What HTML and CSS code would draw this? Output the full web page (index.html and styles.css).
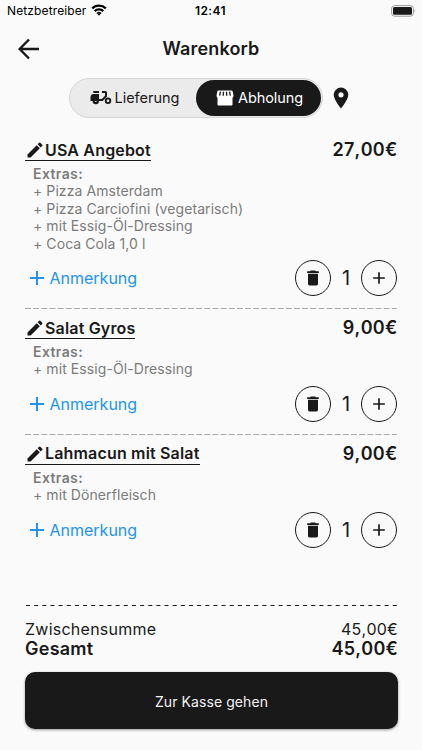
FILE: index.html
```
<!DOCTYPE html>
<html lang="de">
<head>
<meta charset="utf-8">
<title>Warenkorb</title>
<link rel="stylesheet" href="styles.css">
</head>
<body>
<svg class="defs" width="0" height="0">
  <symbol id="edit" viewBox="0 0 24 24"><path d="M3 17.25V21h3.750L17.810 9.940l-3.750-3.750zM20.710 7.040a1 1 0 0 0 0-1.410l-2.340-2.340a1 1 0 0 0-1.410 0l-1.830 1.830 3.750 3.750z"/></symbol>
  <symbol id="trash" viewBox="0 0 24 24"><path d="M6 19c0 1.100.9 2 2 2h8c1.100 0 2-.9 2-2V7H6zM19 4h-3.500l-1-1h-5l-1 1H5v2h14z"/></symbol>
  <symbol id="add" viewBox="0 0 24 24"><path d="M19 13h-6v6h-2v-6H5v-2h6V5h2v6h6z"/></symbol>
</svg>
<div class="status">
  <span class="carrier">Netzbetreiber</span>
  <svg class="wifi" width="16" height="12" viewBox="0 0 16 12"><g fill="none" stroke="#000" stroke-width="2.200"><path d="M1.200 4.400a9.700 9.700 0 0 1 13.600 0"/><path d="M3.700 7.100a6.100 6.100 0 0 1 8.600 0"/></g><path d="M8 11.700 5.400 9a3.700 3.700 0 0 1 5.200 0z"/></svg>
  <span class="time">12:41</span>
  <svg class="battery" width="26" height="12" viewBox="0 0 26 12"><rect x=".6" y=".6" width="21.800" height="10.600" rx="3" fill="none" stroke="#999"/><rect x="2" y="2" width="19" height="7.800" rx="1.500"/><path d="M23.600 4.200q1.600 1.700 0 3.400z" fill="#888"/></svg>
</div>
<header class="header">
  <svg class="back" width="22" height="22" viewBox="0 0 22 22"><path d="M21 11H2M11 1.500 1.700 11l9.300 9.500" fill="none" stroke="#191919" stroke-width="2.400"/></svg>
  <h1>Warenkorb</h1>
</header>
<div class="mode">
  <div class="toggle">
    <div class="option delivery">
      <svg width="22" height="16" viewBox="0 0 22 16"><path d="M3.300 1H9v2H3.300zM3.500 4H9v5h2.800L15 5.700V3h-3V1h3.400q1.600 0 1.600 1.600v3.800L12.700 11H9a3.200 3.200 0 0 1-6.400 0H.5V7.500Q.5 4 3.500 4zM4.600 11a1.200 1.200 0 0 0 2.300 0z"/><circle cx="18" cy="10.800" r="2.300" fill="none" stroke="#191919" stroke-width="1.900"/></svg>
      <span>Lieferung</span>
    </div>
    <div class="option pickup">
      <svg width="18" height="16" viewBox="0 0 18 16"><path d="M2.500.5h13q1 0 1.200 1l.8 4q.1 1.500-1 2.200v6.800q0 1-1 1h-13q-1 0-1-1V7.700Q.4 7 .5 5.500l.8-4q.2-1 1.200-1z" fill="#fff"/><path d="m4.400 1.700-.7 4M7.500 1.700l-.3 4M10.500 1.700l.3 4M13.600 1.700l.7 4" stroke="#191919" stroke-width="1.300"/></svg>
      <span>Abholung</span>
    </div>
  </div>
  <svg class="pin" width="16" height="22" viewBox="0 0 16 22"><path fill-rule="evenodd" d="M8 .5A7.300 7.300 0 0 0 .7 7.800C.7 13 8 21.500 8 21.500S15.300 13 15.300 7.800A7.300 7.300 0 0 0 8 .5zm0 4.700a2.600 2.600 0 1 1 0 5.200 2.600 2.600 0 0 1 0-5.200z"/></svg>
</div>
<main class="cart">
  <section class="item">
    <div class="row"><div class="name"><svg><use href="#edit"/></svg><span>USA Angebot</span></div><strong class="price">27,00€</strong></div>
    <div class="extras"><b>Extras:</b><div>+ Pizza Amsterdam</div><div>+ Pizza Carciofini (vegetarisch)</div><div>+ mit Essig-Öl-Dressing</div><div>+ Coca Cola 1,0 l</div></div>
    <div class="controls"><div class="note"><svg><use href="#add"/></svg><span>Anmerkung</span></div><div class="circle"><svg><use href="#trash"/></svg></div><span class="qty">1</span><div class="circle"><svg><use href="#add"/></svg></div></div>
    <svg class="dash" width="373" height="1"><path d="M0 .5H372"/></svg>
  </section>
  <section class="item">
    <div class="row"><div class="name"><svg><use href="#edit"/></svg><span>Salat Gyros</span></div><strong class="price">9,00€</strong></div>
    <div class="extras"><b>Extras:</b><div>+ mit Essig-Öl-Dressing</div></div>
    <div class="controls"><div class="note"><svg><use href="#add"/></svg><span>Anmerkung</span></div><div class="circle"><svg><use href="#trash"/></svg></div><span class="qty">1</span><div class="circle"><svg><use href="#add"/></svg></div></div>
    <svg class="dash" width="373" height="1"><path d="M0 .5H372"/></svg>
  </section>
  <section class="item">
    <div class="row"><div class="name"><svg><use href="#edit"/></svg><span>Lahmacun mit Salat</span></div><strong class="price">9,00€</strong></div>
    <div class="extras"><b>Extras:</b><div>+ mit Dönerfleisch</div></div>
    <div class="controls"><div class="note"><svg><use href="#add"/></svg><span>Anmerkung</span></div><div class="circle"><svg><use href="#trash"/></svg></div><span class="qty">1</span><div class="circle"><svg><use href="#add"/></svg></div></div>
  </section>
</main>
<footer class="summary">
  <svg class="dash dark" width="373" height="2"><path d="M1 .5H372"/></svg>
  <div class="sum"><span>Zwischensumme</span><span class="amount">45,00€</span></div>
  <div class="sum total"><span>Gesamt</span><span class="amount">45,00€</span></div>
  <div class="checkout">Zur Kasse gehen</div>
</footer>
</body>
</html>
```
FILE: styles.css
```
* { box-sizing: border-box; }
body {
  margin: 0;
  width: 422px;
  height: 750px;
  overflow: hidden;
  display: flex;
  flex-direction: column;
  background: #fafafa;
  color: #191919;
  font-family: Inter, "Liberation Sans", sans-serif;
}
svg { display: block; flex: none; fill: #191919; }
.defs { position: absolute; }
.status { display: grid; grid-template-columns: 79px 16px 1fr auto; column-gap: 5px; align-items: center; height: 22px; padding: 0 5px 1px 7px; font-size: 12px; color: #000; }
.carrier { letter-spacing: .12px; }
.wifi { margin-top: -1px; }
.time { font-weight: 600; letter-spacing: .4px; padding-left: 83px; }
.header { display: grid; grid-template-columns: 22px 1fr 22px; align-items: center; height: 54px; padding: 0 18px; }
h1 { margin: -1px 0 0; text-align: center; font-size: 18px; font-weight: 600; letter-spacing: .15px; }
.mode { display: flex; align-items: center; height: 42px; margin-top: 1px; padding-left: 69px; }
.toggle { display: flex; width: 254px; height: 40px; padding: 1px; border: 1px solid #d6d6d6; border-radius: 20px; background: #ebebeb; }
.option { display: flex; align-items: center; font-size: 14.500px; letter-spacing: -.02px; padding-bottom: 1px; }
.delivery { width: 125px; padding-left: 19px; gap: 2.500px; }
.pickup { width: 125px; padding-left: 20px; gap: 4px; border-radius: 18px; background: #191919; color: #fff; letter-spacing: -.07px; }
.pin { margin-left: 9.500px; }
.cart { width: 373px; margin: 12px 0 0 25px; }
.row { display: flex; justify-content: space-between; height: 30px; }
.name { display: flex; align-items: center; height: 30px; padding-top: 9px; border-bottom: 1px solid #191919; font-size: 16px; font-weight: 600; letter-spacing: .17px; line-height: 21px; }
.name svg { width: 20px; height: 20px; }
.price { font-size: 18px; font-weight: 600; line-height: 24px; padding: 7px .5px 0 0; letter-spacing: .3px; font-kerning: none; }
.extras { padding: 4px 0 0 8px; color: #7b7b7b; font-size: 14px; line-height: 17.400px; letter-spacing: .08px; }
.extras b { display: block; font-weight: 600; letter-spacing: .4px; }
.controls { display: flex; align-items: center; height: 36px; margin: 8px 1px 0 0; }
.note { display: flex; align-items: center; gap: .5px; margin-right: auto; color: #2394ea; font-size: 16px; }
.note svg { width: 24px; height: 24px; fill: #2394ea; }
.circle { display: flex; align-items: center; justify-content: center; width: 36px; height: 36px; border: 1px solid #191919; border-radius: 50%; }
.circle svg { width: 20px; height: 20px; }
.qty { width: 30px; text-align: center; font-size: 20px; }
.dash { margin-top: 12px; stroke: #aaa; stroke-width: 1; stroke-dasharray: 6 2.150; }
.summary { width: 373px; margin: auto 0 21px 25px; }
.dark { margin: 0 0 13px; stroke: #191919; stroke-dasharray: 4 4.150; }
.sum { display: flex; justify-content: space-between; font-size: 16px; line-height: 19px; letter-spacing: .25px; }
.amount { font-kerning: none; }
.total { font-size: 18px; font-weight: 600; line-height: 20px; }
.checkout { display: flex; align-items: center; justify-content: center; height: 57px; margin-top: 13px; padding-top: 1px; border-radius: 10px; background: #191919; color: #f2f2f2; font-size: 14px; letter-spacing: .08px; box-shadow: 0 1px 3px rgba(0,0,0,.4); }
```
